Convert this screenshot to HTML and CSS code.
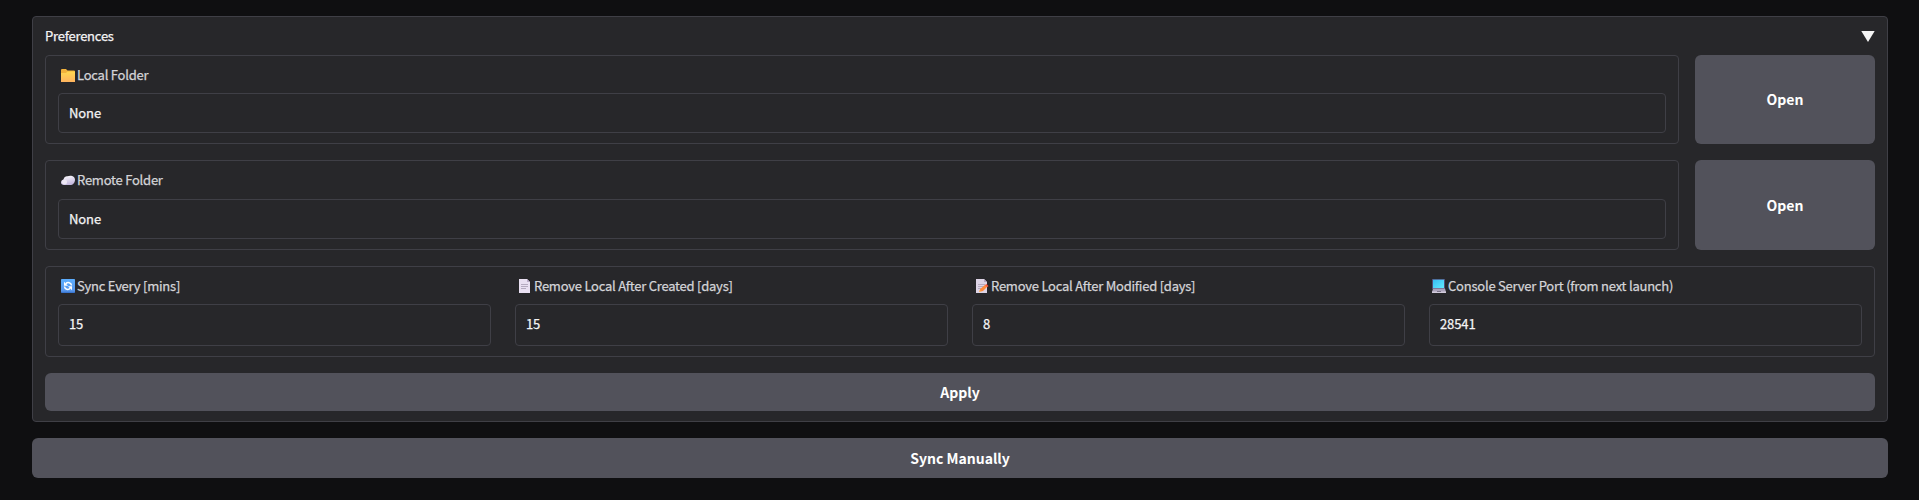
FILE: index.html
```html
<!DOCTYPE html>
<html lang="en">
<head>
<meta charset="utf-8">
<title>Preferences</title>
<link rel="stylesheet" href="styles.css">
</head>
<body>
<main class="page">
  <section class="panel">
    <header class="panel-head">
      <span class="panel-title">Preferences</span>
      <svg class="caret" viewBox="0 0 14 12"><path d="M.3 0h13.400L7 11z" fill="#f4f4f5"/></svg>
    </header>
    <div class="row local">
      <div class="card">
        <div class="field">
          <label class="label" for="local"><svg class="icon" viewBox="0 0 14 14"><defs><linearGradient id="fold" x2="0" y2="1"><stop stop-color="#ffd850"/><stop offset="1" stop-color="#ffb35f"/></linearGradient></defs><path d="M0 1q0-1 1-1h4l1.500 1.500H13q1 0 1 1V5H0z" fill="#f2b23c"/><path d="M0 4h5l1.500-1.500H14V13H0z" fill="url(#fold)"/></svg><span class="text">Local Folder</span></label>
          <input class="input" id="local" value="None">
        </div>
      </div>
      <button class="button">Open</button>
    </div>
    <div class="row remote">
      <div class="card">
        <div class="field">
          <label class="label" for="remote"><svg class="icon" viewBox="0 0 14 14"><defs><linearGradient id="cloud" x2=".3" y2="1"><stop stop-color="#fff"/><stop offset="1" stop-color="#c5b9df"/></linearGradient></defs><path d="M3 11C1 11 0 10 0 8.500S1 5.800 2.500 5.500C3 3 5 2 6.500 2.300 9 1 14 1.500 14 5.700c0 3-2 5.300-5 5.300z" fill="url(#cloud)"/><circle cx="3.500" cy="7.900" r="2.500" fill="#eee8f6"/></svg><span class="text">Remote Folder</span></label>
          <input class="input" id="remote" value="None">
        </div>
      </div>
      <button class="button">Open</button>
    </div>
    <div class="card settings">
      <div class="field">
        <label class="label" for="sync"><svg class="icon" viewBox="0 0 14 14"><defs><linearGradient id="blue" x2="0" y2="1"><stop stop-color="#5caeff"/><stop offset=".85" stop-color="#5796ec"/><stop offset="1" stop-color="#326dc8"/></linearGradient></defs><rect width="14" height="14" rx=".7" fill="url(#blue)"/><path d="M10.500 6.500C10.300 3.400 6.500 2.800 4.800 4.700M3.500 7.500c.2 3.100 4 3.700 5.700 1.800" fill="none" stroke="#fff" stroke-width="1.500"/><path d="M3 2.800v3.900h4zM11 11.200V7.300H7z" fill="#fff"/></svg><span class="text">Sync Every [mins]</span></label>
        <input class="input" id="sync" value="15">
      </div>
      <div class="field">
        <label class="label" for="created"><svg class="icon" viewBox="0 0 14 14"><path d="M1 0h8l3 3v11H1z" fill="#e9e0f2"/><path d="M9 0v3h3z" fill="#bcaec9"/><path d="M3 5.500h7M3 7.500h7M3 9.500h5" stroke="#b5abc0"/></svg><span class="text">Remove Local After Created [days]</span></label>
        <input class="input" id="created" value="15">
      </div>
      <div class="field">
        <label class="label" for="modified"><svg class="icon" viewBox="0 0 14 14"><path d="M1 0h8l3 3v11H1z" fill="#ddd4e6"/><path d="M9 0v3h3z" fill="#b5a8c3"/><path d="M3 5.500h7M3 7.500h6M3 9.500h3" stroke="#b5abc0"/><path d="M4 13l1.200-3 5-4.200 2 2L8 12z" fill="#ff8b3c"/><path d="M10 6l1.500-1 2 2-1.300 1.300z" fill="#f4553f"/><path d="M4 13l.8-1.800 1.400 1.200z" fill="#ffc36b"/></svg><span class="text">Remove Local After Modified [days]</span></label>
        <input class="input" id="modified" value="8">
      </div>
      <div class="field">
        <label class="label" for="port"><svg class="icon" viewBox="0 0 14 14"><defs><linearGradient id="screen" x2="1" y2="1"><stop stop-color="#36bdf4"/><stop offset="1" stop-color="#62eaff"/></linearGradient></defs><path d="M0 0h13v10H0z" fill="#524d79"/><path d="M1 .7h11V9H1z" fill="url(#screen)"/><path d="M1 9.500h12l1 3.500H0z" fill="#aaa2ba"/><path d="M0 12.500h14V14H0z" fill="#d2cbdc"/><path d="M5 12h4v1H5z" fill="#777085"/></svg><span class="text">Console Server Port (from next launch)</span></label>
        <input class="input" id="port" value="28541">
      </div>
    </div>
    <button class="button apply">Apply</button>
  </section>
  <button class="button sync">Sync Manually</button>
</main>
</body>
</html>
```

FILE: styles.css
```css
* { box-sizing: border-box; }
body {
  margin: 0;
  background: #0f0f11;
  color: #f4f4f5;
  font: 13px/20px "Noto Sans CJK JP", "Noto Sans", sans-serif;
  -webkit-text-stroke: .25px currentColor;
}
.page {
  display: flex;
  flex-direction: column;
  gap: 16px;
  height: 500px;
  padding: 16px 31px 0 32px;
}
.panel {
  display: flex;
  flex-direction: column;
  gap: 16px;
  height: 406px;
  padding: 10px 12px;
  background: #27272a;
  border: 1px solid #3f3f46;
  border-radius: 4px;
}
.panel-head {
  display: flex;
  align-items: center;
  justify-content: space-between;
  height: 20px;
  margin-bottom: -8px;
}
.panel-title { padding-bottom: 2px; letter-spacing: -.23px; }
.caret { width: 14px; height: 12px; }
.row {
  display: grid;
  grid-template-columns: 1fr 180px;
  gap: 16px;
}
.local { height: 89px; }
.remote { height: 90px; }
.card {
  padding: 9px 12px 10px;
  border: 1px solid #3f3f46;
  border-radius: 4px;
}
.settings {
  display: grid;
  grid-template-columns: repeat(4, 1fr);
  gap: 24px;
  height: 91px;
}
.field { display: flex; flex-direction: column; gap: 7px; }
.remote .field { gap: 8px; }
.label {
  display: flex;
  align-items: center;
  gap: 2px;
  height: 21px;
  padding-left: 3px;
  color: #d4d4d8;
  letter-spacing: -.23px;
  white-space: nowrap;
}
.text { padding-bottom: 2px; }
.icon { width: 14px; height: 14px; }
.settings .icon { margin-bottom: 1px; }
.input {
  width: 100%;
  height: 40px;
  padding: 0 10px 2px;
  background: transparent;
  border: 1px solid #3f3f46;
  border-radius: 4px;
  color: #f4f4f5;
  font: inherit;
  letter-spacing: -.1px;
}
.settings .input { height: 42px; padding-bottom: 3px; }
.button {
  padding: 0;
  border: 0;
  border-radius: 6px;
  background: #52525b;
  color: #fff;
  font: bold 14px/22px "Noto Sans CJK JP", "Noto Sans", sans-serif;
  -webkit-text-stroke: 0;
}
.local .button { padding-bottom: 1px; }
.apply { height: 38px; }
.sync { height: 40px; }
```
